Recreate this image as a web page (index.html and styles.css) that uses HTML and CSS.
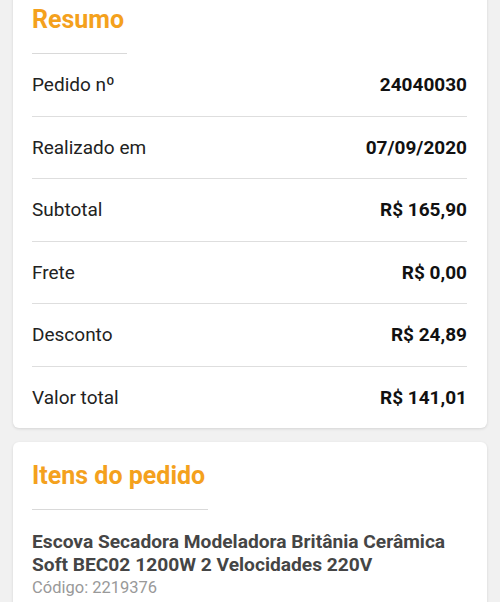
FILE: index.html
```html
<!DOCTYPE html>
<html lang="pt-BR">
<head>
    <meta charset="UTF-8">
    <meta name="viewport" content="width=device-width, initial-scale=1.0">
    <title>Resumo do pedido</title>
    <link rel="stylesheet" href="styles.css">
</head>
<body>

    <div class="card summary">
        <h2 class="card-title">Resumo</h2>

        <!-- Linhas do resumo -->
        <div class="row">
            <span class="label">Pedido nº</span>
            <span class="value">24040030</span>
        </div>
        <div class="row">
            <span class="label">Realizado em</span>
            <span class="value">07/09/2020</span>
        </div>
        <div class="row">
            <span class="label">Subtotal</span>
            <span class="value">R$ 165,90</span>
        </div>
        <div class="row">
            <span class="label">Frete</span>
            <span class="value">R$ 0,00</span>
        </div>
        <div class="row">
            <span class="label">Desconto</span>
            <span class="value">R$ 24,89</span>
        </div>
        <div class="row">
            <span class="label">Valor total</span>
            <span class="value">R$ 141,01</span>
        </div>
    </div>

    <div class="card items">
        <h2 class="card-title">Itens do pedido</h2>

        <div class="item">
            <div class="item-name">Escova Secadora Modeladora Britânia Cerâmica Soft BEC02 1200W 2 Velocidades 220V</div>
            <div class="item-code">Código: 2219376</div>
        </div>
    </div>

</body>
</html>
```

FILE: styles.css
```css
body {
    font-family: Roboto, "Noto Sans", Arial, sans-serif;
    background-color: #f1f1f1;
    margin: 0;
    padding: 0;
    color: #222;
}

.card {
    background-color: #fff;
    margin: 0 13px;
    padding: 0 20px 0 19px;
    border-radius: 6px;
    box-shadow: 0 1px 3px rgba(0, 0, 0, 0.12);
}

.summary {
    margin-top: -10px;
    padding-top: 16px;
}

.items {
    margin-top: 14px;
    padding-top: 20px;
    padding-bottom: 20px;
}

.card-title {
    display: inline-block;
    margin: 0;
    padding: 0 3px 19px 0;
    font-size: 25px;
    line-height: 28px;
    font-weight: 700;
    color: #f4a11d;
    border-bottom: 1px solid #d9d9d9;
}

.row {
    display: flex;
    justify-content: space-between;
    align-items: center;
    padding: 20px 0;
    line-height: 21.5px;
    font-size: 19px;
    border-bottom: 1px solid #dedede;
}

.row:last-child {
    border-bottom: none;
}

.value {
    font-weight: 700;
    color: #111;
}

.item {
    padding-top: 20px;
}

.item-name {
    font-size: 19.2px;
    line-height: 23px;
    font-weight: 700;
    color: #454545;
}

.item-code {
    font-size: 16.5px;
    line-height: 24px;
    color: #999;
}
```
